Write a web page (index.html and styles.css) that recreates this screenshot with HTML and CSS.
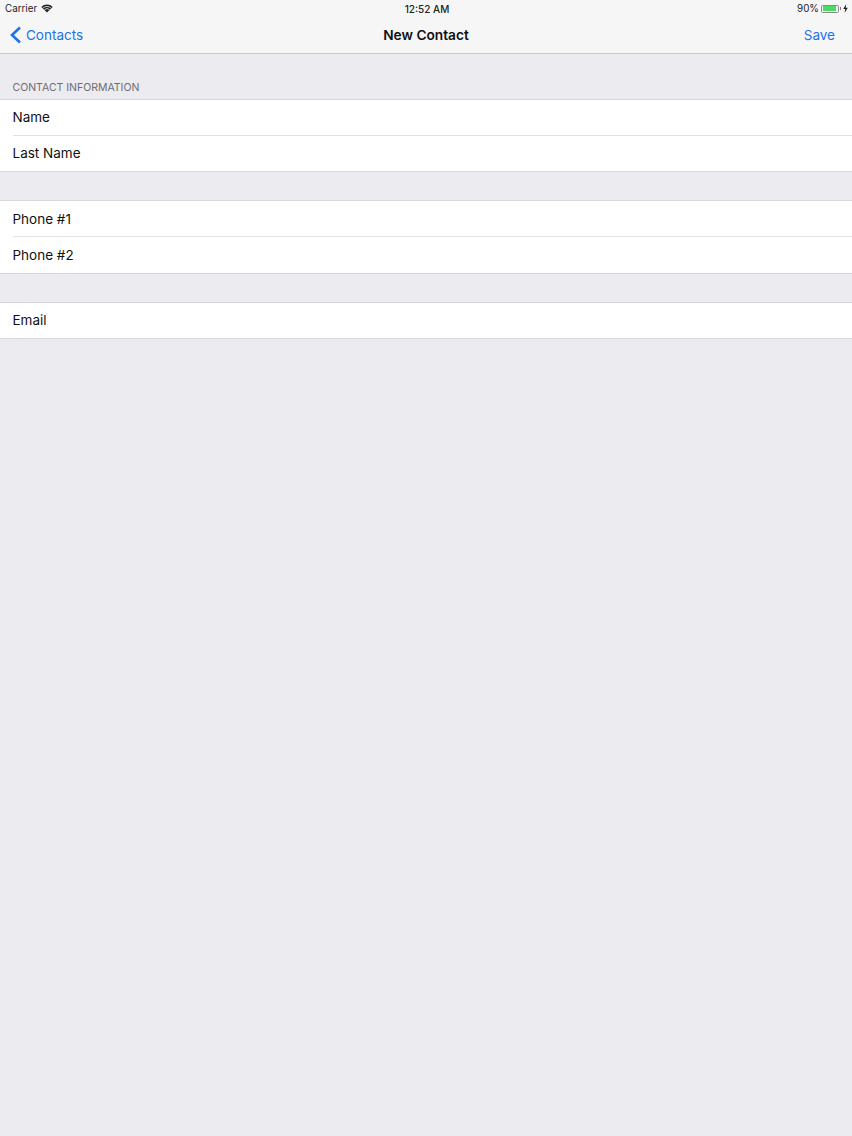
FILE: index.html
```html
<!DOCTYPE html>
<html lang="en">
<head>
<meta charset="utf-8">
<title>New Contact</title>
<link rel="stylesheet" href="styles.css">
</head>
<body>
<header class="bar">
  <div class="status">
    <div class="status-left">
      <span>Carrier</span>
      <svg class="wifi" width="12" height="9" viewBox="0 0 12 9"><path d="M6 8.6 L0.3 2.9 A8 8 0 0 1 11.7 2.9 Z" fill="#222"/><path d="M1.9 4.1 A6 6 0 0 1 10.1 4.1" fill="none" stroke="#f6f6f7" stroke-width="0.8"/><path d="M3.5 5.7 A3.6 3.6 0 0 1 8.5 5.7" fill="none" stroke="#f6f6f7" stroke-width="0.8"/></svg>
    </div>
    <div class="status-time">12:52 AM</div>
    <div class="status-right">
      <span>90%</span>
      <span class="battery"><span class="battery-fill"></span></span>
      <span class="battery-tip"></span>
      <svg class="bolt" width="5" height="9" viewBox="0 0 5 9"><path d="M3.2 0 L0.2 5 H2.2 L1.6 9 L4.8 3.7 H2.7 Z" fill="#222"/></svg>
    </div>
  </div>
  <nav class="nav">
    <a class="nav-back">
      <svg class="chevron" width="12" height="18" viewBox="0 0 12 18"><path d="M10 1.5 L2 9 L10 16.5" fill="none" stroke="#1b73ea" stroke-width="2.6"/></svg>
      <span>Contacts</span>
    </a>
    <h1 class="nav-title">New Contact</h1>
    <a class="nav-save">Save</a>
  </nav>
</header>
<main>
  <h2 class="section-title">CONTACT INFORMATION</h2>
  <section class="group group-first">
    <div class="row">Name</div>
    <div class="row">Last Name</div>
  </section>
  <div class="gap"></div>
  <section class="group">
    <div class="row">Phone #1</div>
    <div class="row">Phone #2</div>
  </section>
  <div class="gap"></div>
  <section class="group group-single">
    <div class="row">Email</div>
  </section>
</main>
</body>
</html>
```
FILE: styles.css
```css
* { box-sizing: border-box; }
html, body { margin: 0; padding: 0; }
body {
  width: 852px;
  height: 1136px;
  overflow: hidden;
  background: #ecebf0;
  color: #111;
  font-family: "Inter", "Liberation Sans", sans-serif;
}
.bar {
  height: 54px;
  background: #f6f6f7;
  border-bottom: 1px solid #c9c9cd;
}
.status {
  height: 17px;
  padding: 0 4px 0 5px;
  display: grid;
  grid-template-columns: 1fr auto 1fr;
  align-items: center;
  font-size: 9.8px;
  color: #222;
}
.status-left { display: flex; align-items: center; gap: 4px; }
.status-time { font-weight: 500; font-size: 10px; padding-left: 1px; }
.status-right { display: flex; align-items: center; justify-content: flex-end; }
.wifi { display: block; }
.battery {
  width: 18px;
  height: 8px;
  margin-left: 2px;
  border: 0.5px solid #8a8a8a;
  border-radius: 1.5px;
  padding: 0.5px;
  display: block;
}
.battery-fill { display: block; width: 90%; height: 100%; background: #4cd964; }
.battery-tip { width: 1px; height: 3px; background: #777; margin-right: 2px; margin-left: 1px; }
.nav {
  height: 36px;
  padding: 0 17px 1px 10px;
  display: flex;
  align-items: center;
  justify-content: space-between;
  position: relative;
  font-size: 13.5px;
  color: #1b73ea;
}
.nav-back { display: flex; align-items: center; gap: 4px; }
.chevron { display: block; }
.nav-title {
  margin: 0;
  position: absolute;
  left: 0;
  right: 0;
  text-align: center;
  font-size: 13.7px;
  font-weight: 600;
  color: #111;
}
.section-title {
  margin: 0;
  height: 45px;
  padding: 27px 12.5px 0;
  font-size: 10.5px;
  line-height: 13px;
  font-weight: 400;
  color: #6d6d72;
}
.group {
  background: #fff;
  border-top: 1px solid #d8d8dc;
  border-bottom: 1px solid #d8d8dc;
}
.row {
  height: 36px;
  margin-left: 12.5px;
  display: flex;
  align-items: center;
  font-size: 13.5px;
  color: #111;
  border-bottom: 1px solid #e2e2e5;
}
.row:last-child { border-bottom: 0; }
.group-first .row,
.group-single .row { padding-bottom: 1px; }
.group-first .row:last-child,
.group-single .row { height: 35px; }
.gap { height: 28px; }
```
